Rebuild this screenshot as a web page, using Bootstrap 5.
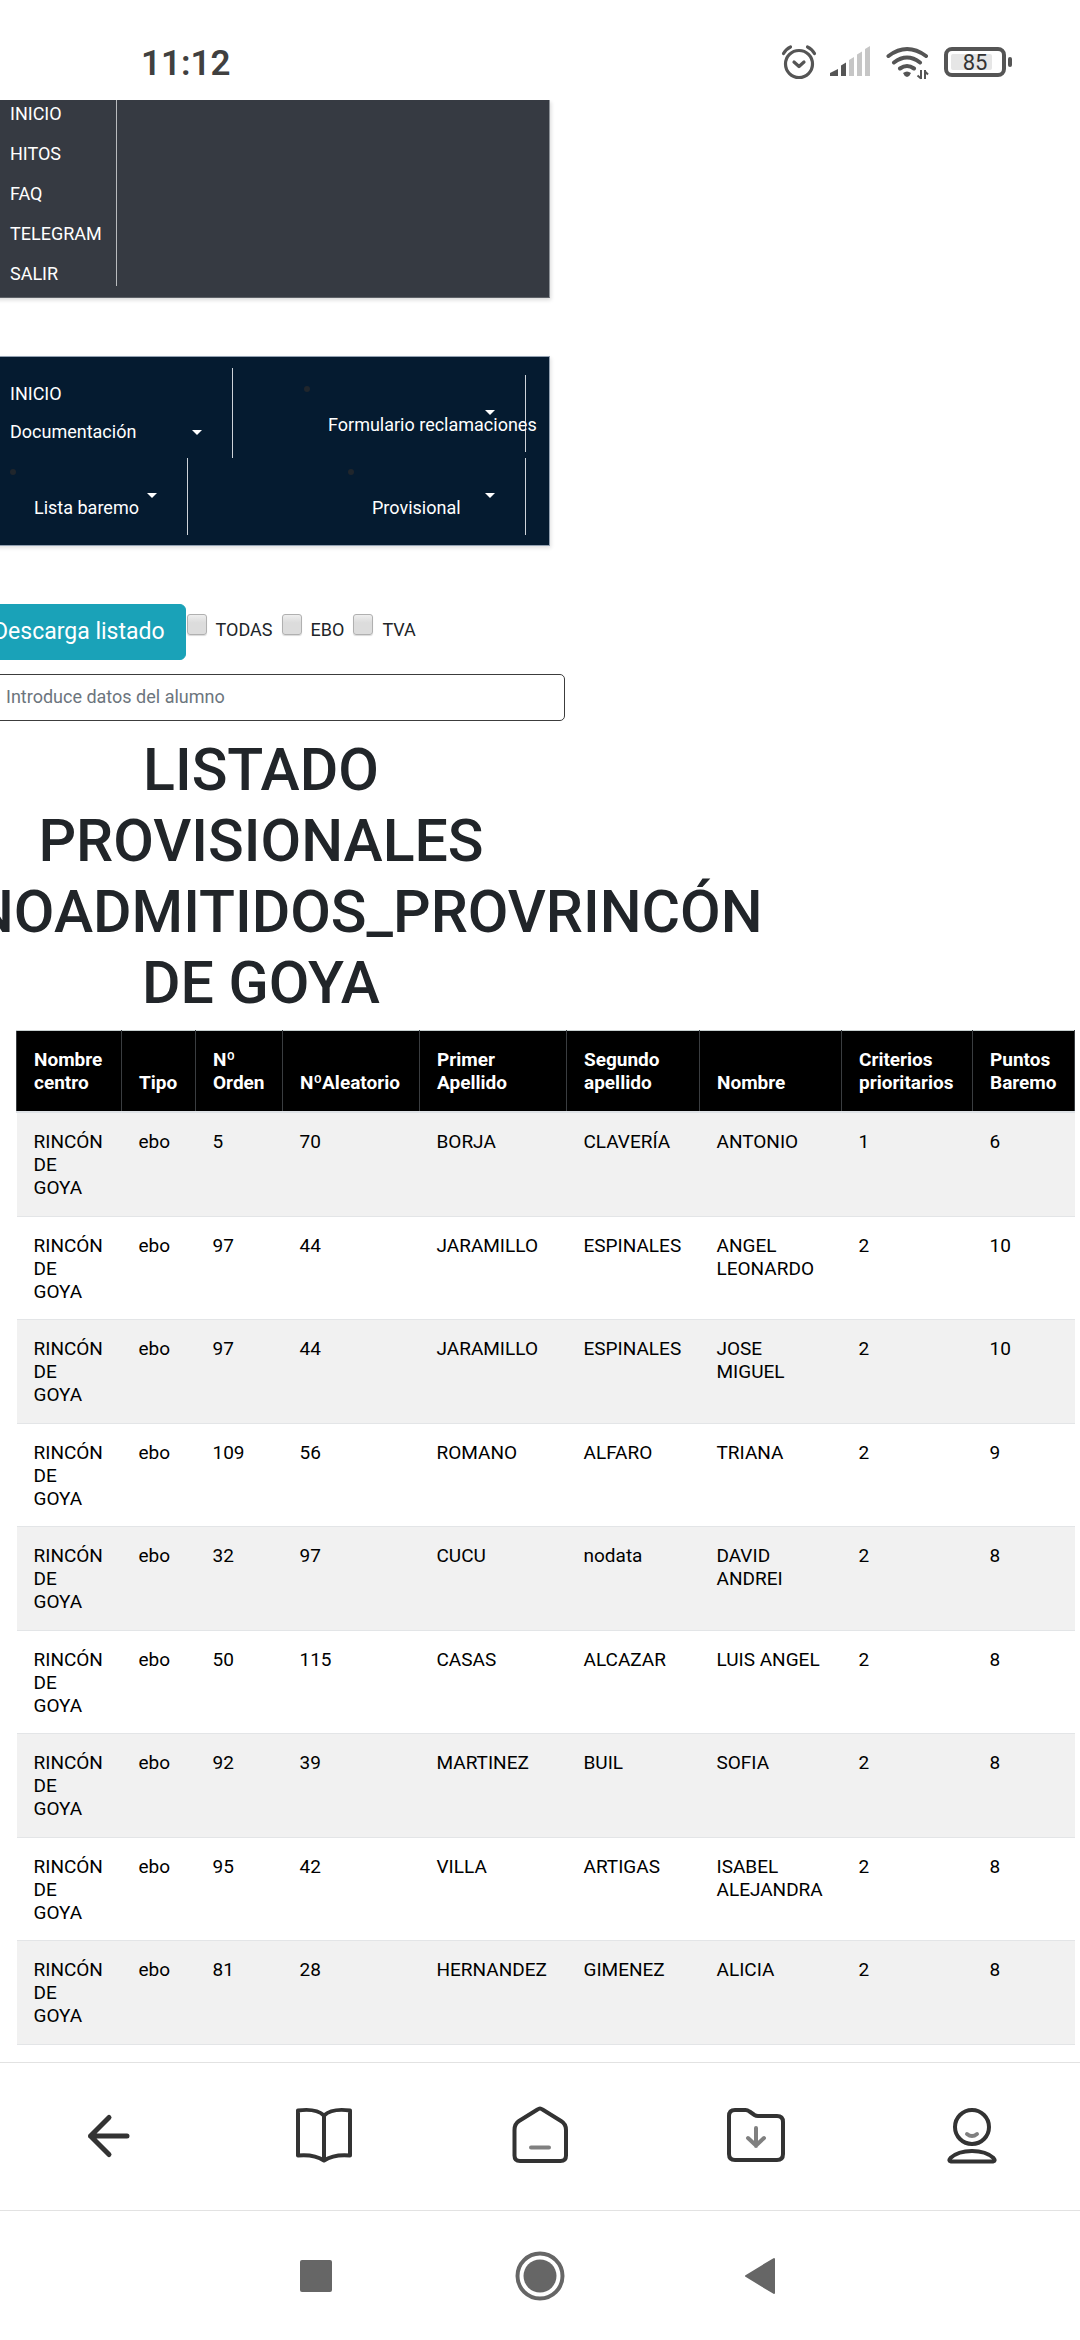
<!DOCTYPE html>
<html lang="es">
<head>
<meta charset="utf-8">
<meta name="viewport" content="width=device-width, initial-scale=1">
<title>Listado provisionales</title>
<link href="https://cdn.jsdelivr.net/npm/bootstrap@5.3.0/dist/css/bootstrap.min.css" rel="stylesheet">
<style>
body { font-family: Roboto, "Liberation Sans", sans-serif; font-size: 18px; line-height: 24px; color: #212529; background: #fff; overflow-x: hidden; }
.status-strip { height: 100px; padding: 0 68px 16px 141px; color: #404040; }
.clock-text { font-size: 35px; line-height: 40px; font-weight: 600; }
/* The document is panned slightly to the right inside the viewport */
.doc-view { overflow: hidden; }
.doc-body { margin-left: -28px; }
.menu-box { width: 578px; }
.menu-box a, .menu-box button { color: #fff; text-decoration: none; }
.menu-top { background: #363a42; border-right: 1px solid #8d9298; border-bottom: 1px solid #5d6167; box-shadow: 1px 2px 4px rgba(0,0,0,.15); padding-bottom: 11px; }
.menu-top ul { width: 145px; padding: 2px 0 0 38px; gap: 16px; border-right: 1px solid #b9bbbe; }
.menu-school { margin-top: 58px; background: #051b30; border: 1px solid #93a1b1; box-shadow: 1px 2px 4px rgba(0,0,0,.12); padding: 11px 23px 10px 0; }
.menu-school button { background: none; border: 0; padding: 0; line-height: 24px; text-align: left; }
.menu-first { width: 260px; padding: 14px 30px 14px 37px; gap: 14px; border-right: 1px solid #ced3d9; }
.arrow-down { border: 5px solid transparent; border-top-color: #fff; border-bottom: 0; }
.menu-drop { width: 178px; height: 77px; padding-top: 11px; border-right: 1px solid #ced3d9; }
.menu-drop::before { content: ""; width: 6px; height: 6px; border-radius: 50%; background: #20262c; }
.menu-drop button { margin-top: 18px; white-space: nowrap; }
.menu-drop .arrow-down { align-self: flex-end; margin-right: 30px; }
.menu-drop .drop-text { margin: -2px 0 0 24px; }
.menu-wide { width: 222px; margin-top: 7px; }
.menu-second { padding-left: 37px; }
.tool-row { margin-top: 58px; gap: 9px; }
.btn-listing, .btn-listing:hover { background: #1aa2b8; border: 1px solid #1aa2b8; color: #fff; font-size: 23px; line-height: 32px; padding: 11px 20px; border-radius: 6px; margin-right: -8px; }
.tool-row input { appearance: none; width: 20px; height: 21px; margin: 10px 0 0; border: 1px solid #b0b0b0; border-radius: 3px; background: linear-gradient(#eee, #dcdcdc 40%); box-shadow: 0 1px 1px rgba(0,0,0,.15); }
.tool-row label { margin-top: 14px; }
.search-box { display: block; width: 593px; height: 47px; margin-top: 14px; padding: 0 12px 2px 33px; font-size: 18px; border: 1px solid #3c3c3c; border-radius: 5px; color: #212529; }
.search-box::placeholder { color: #6c757d; opacity: 1; }
.list-title { width: 578px; margin: 13px 0 12px; font-size: 59px; line-height: 71px; font-weight: 500; text-align: center; }
.table-wrap { margin: 0 6px 0 44px; }
.pupils { table-layout: fixed; margin: 0; color: #000; font-size: 19px; line-height: 23px; border-collapse: collapse; }
.pupils th { background: #000; color: #fff; font-weight: 700; vertical-align: bottom; white-space: nowrap; padding: 17px 0 17px 17px; border: 1px solid #3a3d40; border-top-color: #c8d0d0; border-bottom: 2px solid #dee2e6; }
.pupils td { background: #fff; box-shadow: none; color: #000; padding: 17px 0 16px 17px; border: 0; border-bottom: 1px solid #e3e5e7; }
.pupils tbody tr:nth-of-type(odd) td { background: #f1f1f1; padding-bottom: 17px; }
.w-a { width: 105px } .w-b { width: 74px } .w-c { width: 87px } .w-d { width: 137px } .w-e { width: 147px } .w-f { width: 133px } .w-g { width: 142px } .w-h { width: 131px } .w-i { width: 102px }
.browser-bar { height: 148px; border-top: 1px solid #e2e2e2; padding-bottom: 2px; }
.browser-bar button, .system-bar button { background: none; border: 0; padding: 0; line-height: 0; }
.system-bar { height: 130px; border-top: 1px solid #e2e2e2; gap: 172px; }
.ink { fill: none; stroke: #333; stroke-width: 4; stroke-linecap: round; stroke-linejoin: round; }
.ink .soft { stroke: #808080; }
</style>
<script src="https://cdn.jsdelivr.net/npm/bootstrap@5.3.0/dist/js/bootstrap.bundle.min.js"></script>
</head>
<body class="d-flex flex-column min-vh-100">
<header class="status-strip d-flex align-items-end justify-content-between">
  <span class="clock-text">11:12</span>
  <svg width="232" height="44" viewBox="0 0 232 44" aria-label="Estado del dispositivo">
    <g fill="none" stroke="#555" stroke-width="3.2" stroke-linecap="round" stroke-linejoin="round">
      <circle cx="19" cy="24" r="13.5"/><path d="M14 22l5 4.500 5-4.500M3.500 13.500Q6 9 10.500 7M34.500 13.500Q32 9 27.500 7"/>
    </g>
    <path d="M50 36v-3l8-4v7z" fill="#555"/><path d="M61 36V25.500l5-3V36z" fill="#555"/>
    <path d="M69 36V20l5-3v19zM77 36V14.500l5-3V36zM85 36V9l5-3v30z" fill="#c6c6c6"/>
    <g fill="none" stroke="#555" stroke-width="4" stroke-linecap="round">
      <path d="M108.500 16Q127 2 146 16M114 22.500Q127 12.500 140 22.500M120 28.500Q127 23.500 134 28.500"/>
    </g>
    <path d="M123 33q4-3 8 0-1 3-4 4-3-1-4-4z" fill="#555"/>
    <path d="M141 30v9M137.500 35.500l3.500 3M145 39v-9M145 31.500l3 3" stroke="#555" stroke-width="2" fill="none"/>
    <rect x="166" y="9" width="58" height="26" rx="6" fill="none" stroke="#555" stroke-width="4"/>
    <rect x="171" y="14" width="41" height="16" rx="2" fill="#e6e6e6"/>
    <rect x="228" y="17" width="4" height="10" rx="2" fill="#555"/>
    <text x="195" y="30" text-anchor="middle" font-family="Roboto, sans-serif" font-size="22" font-weight="400" fill="#333">85</text>
  </svg>
</header>

<main class="doc-view flex-grow-1">
  <div class="doc-body">
    <nav class="menu-box menu-top" aria-label="General">
      <ul class="list-unstyled d-flex flex-column mb-0">
        <li><a href="#">INICIO</a></li>
        <li><a href="#">HITOS</a></li>
        <li><a href="#">FAQ</a></li>
        <li><a href="#">TELEGRAM</a></li>
        <li><a href="#">SALIR</a></li>
      </ul>
    </nav>

    <nav class="menu-box menu-school" aria-label="Centro">
      <div class="d-flex justify-content-between align-items-start">
        <div class="menu-first d-flex flex-column">
          <a href="#">INICIO</a>
          <button type="button" class="d-flex align-items-center justify-content-between">Documentación <span class="arrow-down"></span></button>
        </div>
        <div class="menu-drop menu-wide d-flex flex-column">
          <button type="button" class="d-flex flex-column"><span class="arrow-down"></span><span class="drop-text">Formulario reclamaciones</span></button>
        </div>
      </div>
      <div class="menu-second d-flex justify-content-between">
        <div class="menu-drop d-flex flex-column">
          <button type="button" class="d-flex flex-column"><span class="arrow-down"></span><span class="drop-text">Lista baremo</span></button>
        </div>
        <div class="menu-drop d-flex flex-column">
          <button type="button" class="d-flex flex-column"><span class="arrow-down"></span><span class="drop-text">Provisional</span></button>
        </div>
      </div>
    </nav>

    <div class="tool-row d-flex align-items-start">
      <button type="button" class="btn btn-listing">Descarga listado</button>
      <input type="checkbox" id="f-all"><label for="f-all">TODAS</label>
      <input type="checkbox" id="f-ebo"><label for="f-ebo">EBO</label>
      <input type="checkbox" id="f-tva"><label for="f-tva">TVA</label>
    </div>
    <input type="text" class="search-box" placeholder="Introduce datos del alumno" aria-label="Introduce datos del alumno">

    <h1 class="list-title">LISTADO PROVISIONALES NOADMITIDOS_PROVRINCÓN DE GOYA</h1>

    <div class="table-wrap">
      <table class="table pupils">
        <colgroup><col class="w-a"><col class="w-b"><col class="w-c"><col class="w-d"><col class="w-e"><col class="w-f"><col class="w-g"><col class="w-h"><col class="w-i"></colgroup>
        <thead>
          <tr><th>Nombre<br>centro</th><th>Tipo</th><th>Nº<br>Orden</th><th>NºAleatorio</th><th>Primer<br>Apellido</th><th>Segundo<br>apellido</th><th>Nombre</th><th>Criterios<br>prioritarios</th><th>Puntos<br>Baremo</th></tr>
        </thead>
        <tbody>
          <tr><td>RINCÓN<br>DE<br>GOYA</td><td>ebo</td><td>5</td><td>70</td><td>BORJA</td><td>CLAVERÍA</td><td>ANTONIO</td><td>1</td><td>6</td></tr>
          <tr><td>RINCÓN<br>DE<br>GOYA</td><td>ebo</td><td>97</td><td>44</td><td>JARAMILLO</td><td>ESPINALES</td><td>ANGEL<br>LEONARDO</td><td>2</td><td>10</td></tr>
          <tr><td>RINCÓN<br>DE<br>GOYA</td><td>ebo</td><td>97</td><td>44</td><td>JARAMILLO</td><td>ESPINALES</td><td>JOSE<br>MIGUEL</td><td>2</td><td>10</td></tr>
          <tr><td>RINCÓN<br>DE<br>GOYA</td><td>ebo</td><td>109</td><td>56</td><td>ROMANO</td><td>ALFARO</td><td>TRIANA</td><td>2</td><td>9</td></tr>
          <tr><td>RINCÓN<br>DE<br>GOYA</td><td>ebo</td><td>32</td><td>97</td><td>CUCU</td><td>nodata</td><td>DAVID<br>ANDREI</td><td>2</td><td>8</td></tr>
          <tr><td>RINCÓN<br>DE<br>GOYA</td><td>ebo</td><td>50</td><td>115</td><td>CASAS</td><td>ALCAZAR</td><td>LUIS ANGEL</td><td>2</td><td>8</td></tr>
          <tr><td>RINCÓN<br>DE<br>GOYA</td><td>ebo</td><td>92</td><td>39</td><td>MARTINEZ</td><td>BUIL</td><td>SOFIA</td><td>2</td><td>8</td></tr>
          <tr><td>RINCÓN<br>DE<br>GOYA</td><td>ebo</td><td>95</td><td>42</td><td>VILLA</td><td>ARTIGAS</td><td>ISABEL<br>ALEJANDRA</td><td>2</td><td>8</td></tr>
          <tr><td>RINCÓN<br>DE<br>GOYA</td><td>ebo</td><td>81</td><td>28</td><td>HERNANDEZ</td><td>GIMENEZ</td><td>ALICIA</td><td>2</td><td>8</td></tr>
        </tbody>
      </table>
    </div>
  </div>
</main>

<nav class="browser-bar d-flex align-items-center" aria-label="Navegador">
  <button type="button" class="flex-fill" aria-label="Atrás"><svg class="ink" width="72" height="72" viewBox="0 0 72 72"><path d="M18.500 36H55M37 17.500L18.500 36 37 54.500" stroke-width="5"/></svg></button>
  <button type="button" class="flex-fill" aria-label="Marcadores"><svg class="ink" width="72" height="72" viewBox="0 0 72 72"><path d="M10 10.500Q28 8 36 15.500Q44 8 62 10.500V55.500Q46 54 36 60.500Q26 54 10 55.500ZM36 15.500V60"/></svg></button>
  <button type="button" class="flex-fill" aria-label="Página principal"><svg class="ink" width="72" height="72" viewBox="0 0 72 72"><path d="M33.500 9.500Q36 7.500 38.500 9.500L57 21Q62 24 62 30V55.500Q62 61 56.500 61H16Q10.500 61 10.500 55.500V30Q10.500 24 15 21Z"/><path class="soft" d="M27 47.500H45"/></svg></button>
  <button type="button" class="flex-fill" aria-label="Descargas"><svg class="ink" width="72" height="72" viewBox="0 0 72 72"><path d="M15 10H25.500Q27.500 10 29.500 11.500L34.500 15Q36 16 38 16H57Q63 16 63 22V54Q63 60 57 60H15Q9 60 9 54V16Q9 10 15 10Z"/><path class="soft" d="M36 28V46M28 38L36 45.500 44 38"/></svg></button>
  <button type="button" class="flex-fill" aria-label="Perfil"><svg class="ink" width="72" height="72" viewBox="0 0 72 72"><circle cx="36" cy="27" r="17"/><path class="soft" d="M31 34Q36 38 41 34"/><path d="M15 61.500Q12 61 14.500 58Q22 51 36 51T57.500 58Q60 61 57 61.500Z"/></svg></button>
</nav>
<nav class="system-bar d-flex align-items-center justify-content-center" aria-label="Sistema">
  <button type="button" aria-label="Recientes"><svg width="50" height="50" viewBox="0 0 50 50"><rect x="7" y="9" width="32" height="32" rx="2" fill="#666"/></svg></button>
  <button type="button" aria-label="Inicio"><svg width="50" height="50" viewBox="0 0 50 50"><circle cx="25" cy="25" r="22.500" fill="none" stroke="#666" stroke-width="4"/><circle cx="25" cy="25" r="16.500" fill="#666"/></svg></button>
  <button type="button" aria-label="Volver"><svg width="50" height="50" viewBox="0 0 50 50"><path d="M9 25L37 8V42Z" fill="#666" stroke="#666" stroke-width="2" stroke-linejoin="round"/></svg></button>
</nav>
</body>
</html>
